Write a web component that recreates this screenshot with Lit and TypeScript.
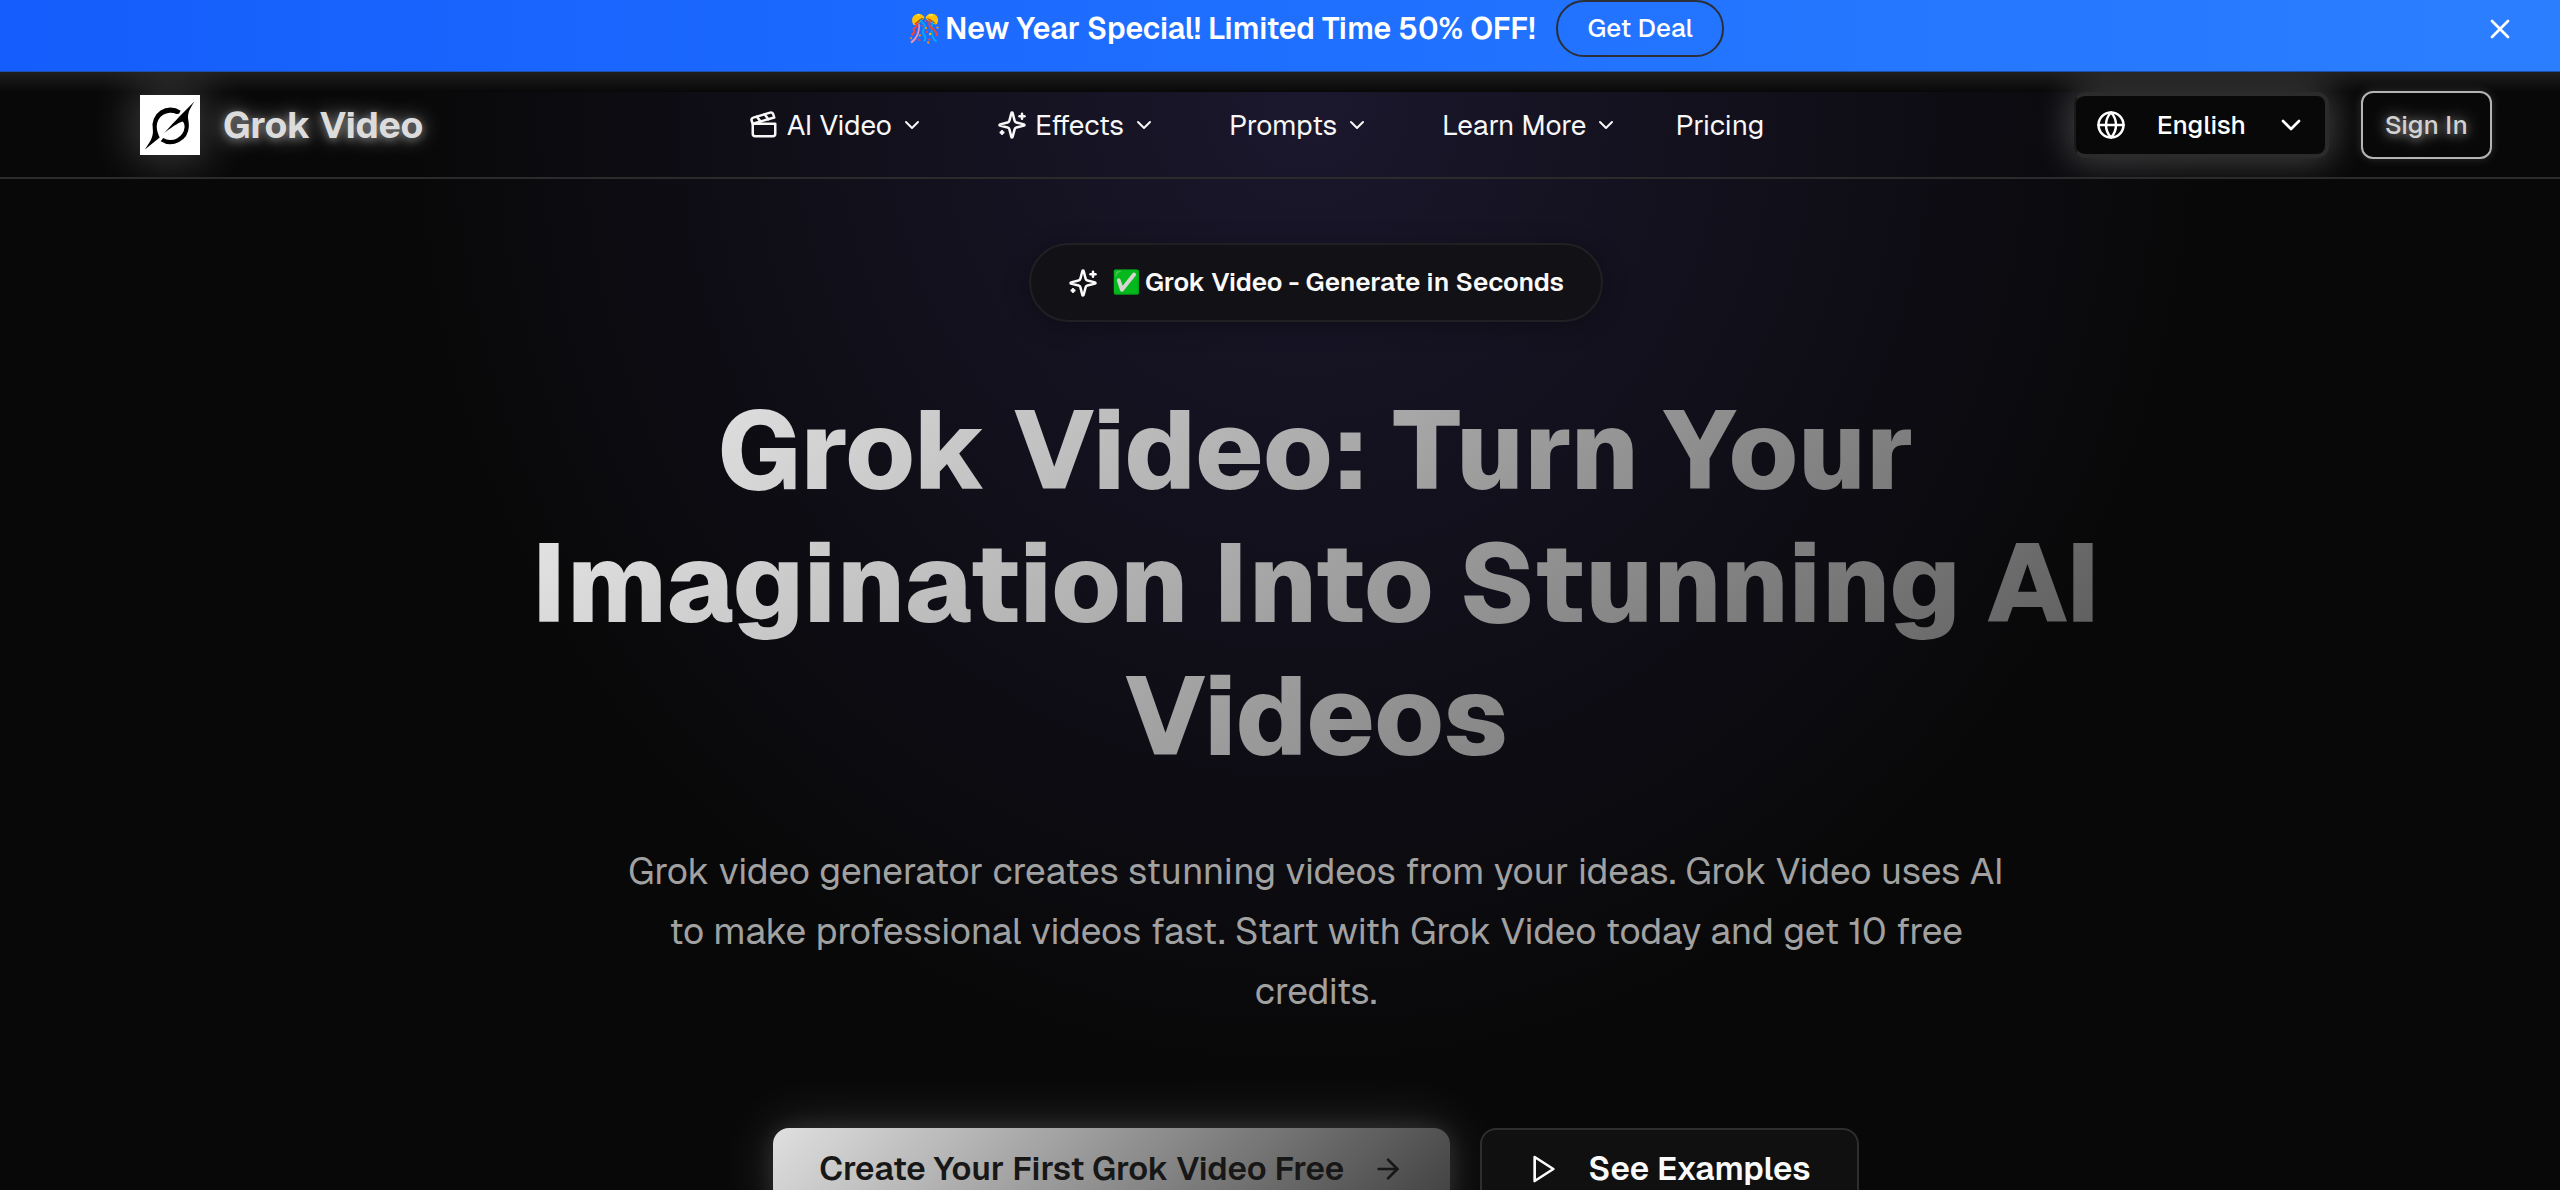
import { LitElement, html, css, svg } from "lit";
import { customElement, property, state } from "lit/decorators.js";

const ICONS = {
  clapper: svg`<path d="M20.2 6 3 11l-.9-2.4c-.3-1.1.3-2.2 1.3-2.5l13.5-4c1.1-.3 2.2.3 2.5 1.3Z"/><path d="m6.2 5.3 3.1 3.9"/><path d="m12.4 3.4 3.1 4"/><path d="M3 11h18v8a2 2 0 0 1-2 2H5a2 2 0 0 1-2-2Z"/>`,
  sparkles: svg`<path d="M9.937 15.5A2 2 0 0 0 8.5 14.063l-6.135-1.582a.5.5 0 0 1 0-.962L8.5 9.936A2 2 0 0 0 9.937 8.5l1.582-6.135a.5.5 0 0 1 .963 0L14.063 8.5A2 2 0 0 0 15.5 9.937l6.135 1.581a.5.5 0 0 1 0 .964L15.5 14.063a2 2 0 0 0-1.437 1.437l-1.582 6.135a.5.5 0 0 1-.963 0z"/><path d="M20 3v4"/><path d="M22 5h-4"/><path d="M4 17v2"/><path d="M5 18H3"/>`,
  globe: svg`<circle cx="12" cy="12" r="10"/><path d="M12 2a14.5 14.5 0 0 0 0 20 14.5 14.5 0 0 0 0-20"/><path d="M2 12h20"/>`,
  chevron: svg`<path d="m6 9 6 6 6-6"/>`,
  arrow: svg`<path d="M5 12h14"/><path d="m12 5 7 7-7 7"/>`,
  play: svg`<polygon points="5 3 19 12 5 21"/>`,
  close: svg`<path d="M18 6 6 18"/><path d="m6 6 12 12"/>`,
};
type IconName = keyof typeof ICONS;

@customElement("line-icon")
class LineIcon extends LitElement {
  @property() name: IconName = "globe";
  static styles = css`
    :host { display: inline-flex; flex: none; width: 30px; height: 30px; }
    .glyph {
      width: 100%; height: 100%; fill: none; stroke: currentColor;
      stroke-width: 2; stroke-linecap: round; stroke-linejoin: round;
    }
  `;
  render() {
    return html`<svg class="glyph" viewBox="0 0 24 24" aria-hidden="true">${ICONS[this.name]}</svg>`;
  }
}

const FONT = css`"Geist", "Inter", "Liberation Sans", sans-serif`;

@customElement("promo-banner")
class PromoBanner extends LitElement {
  @state() private open = true;
  static styles = css`
    :host { display: block; }
    .banner {
      display: grid; grid-template-columns: 1fr auto 1fr; align-items: center;
      padding: 0 44px 14px 116px;
      border-bottom: 1px solid #1c4fae;
      background: linear-gradient(90deg, #155dfc, #1f6fff 50%, #2b7fff);
      color: #fff;
    }
    .message { grid-column: 2; display: flex; align-items: center; gap: 21px; }
    .text {
      display: flex; align-items: center; gap: 3px;
      font-size: 30px; line-height: 40px; font-weight: 600;
    }
    .emoji { font-size: 27px; line-height: 40px; }
    .deal {
      font: 500 26px/33px ${FONT}; color: #fff; background: none;
      border: 2px solid #2b2f38; border-radius: 28px; padding: 10px 29px; cursor: pointer;
    }
    .close {
      justify-self: end; display: flex; padding: 0; border: 0; background: none;
      color: #fff; cursor: pointer;
    }
    .close line-icon { width: 32px; height: 32px; }
  `;
  render() {
    if (!this.open) return null;
    return html`
      <div class="banner" role="region" aria-label="Promotion">
        <div class="message">
          <span class="text"><span class="emoji">🎊</span> New Year Special! Limited Time 50% OFF!</span>
          <button class="deal" type="button">Get Deal</button>
        </div>
        <button class="close" type="button" aria-label="Close" @click=${() => (this.open = false)}>
          <line-icon name="close"></line-icon>
        </button>
      </div>
    `;
  }
}

interface NavItem { label: string; icon?: IconName; menu: boolean }
const NAV: NavItem[] = [
  { label: "AI Video", icon: "clapper", menu: true },
  { label: "Effects", icon: "sparkles", menu: true },
  { label: "Prompts", menu: true },
  { label: "Learn More", menu: true },
  { label: "Pricing", menu: false },
];

@customElement("site-header")
class SiteHeader extends LitElement {
  static styles = css`
    :host { display: block; }
    .bar {
      display: flex; align-items: center; justify-content: space-between;
      height: 105px; padding: 0 68px 0 140px;
      border-bottom: 2px solid #2b2b2b;
      background: linear-gradient(#1e1e1e, #080808) 0 0 / 100% 20px no-repeat;
      overflow: hidden;
    }
    .brand { display: flex; align-items: center; gap: 23px; color: inherit; text-decoration: none; }
    .logo {
      width: 60px; height: 60px; background: #fff;
      box-shadow: 0 0 48px 4px rgba(255, 255, 255, 0.24);
    }
    .name {
      font-size: 37px; line-height: 44px; font-weight: 700; color: #dcdcdc;
      text-shadow: 0 0 20px rgba(255, 255, 255, 0.5), 0 2px 8px rgba(255, 255, 255, 0.35);
    }
    .nav { display: flex; align-items: center; gap: 41px; }
    .item {
      display: flex; align-items: center; gap: 8px; padding: 0 16px; margin: 0; border: 0;
      background: none; color: #f7f7f7; font: 400 28px/40px ${FONT};
      text-decoration: none; cursor: pointer;
    }
    .plain { padding: 0; }
    .caret { width: 24px; height: 24px; }
    .tools { display: flex; align-items: center; gap: 32px; }
    .language {
      display: flex; align-items: center; box-sizing: border-box; height: 66px;
      padding: 0 18px 0 20px; color: #fff; background: #080808;
      border: 4px solid #2b2b2b; border-left: 2px solid #1a1a1a; border-radius: 12px;
      box-shadow: 0 0 36px 4px rgba(255, 255, 255, 0.24);
    }
    .picker {
      appearance: none; border: 0; outline: 0; margin: 0; padding: 0 28px 0 31px;
      background: transparent; color: #fff; font: 500 26px/40px ${FONT};
    }
    .drop { width: 32px; height: 32px; }
    .sign {
      box-sizing: border-box; height: 68px; padding: 0 22px; border: 2px solid #b4b4b4;
      border-radius: 12px; background: #080808; color: #d2d2d2;
      font: 500 26px/40px ${FONT}; cursor: pointer;
      box-shadow: 0 0 10px rgba(255, 255, 255, 0.16);
      text-shadow: 0 0 18px rgba(255, 255, 255, 0.55), 0 2px 8px rgba(255, 255, 255, 0.35);
    }
  `;
  private entry(item: NavItem) {
    if (!item.menu) return html`<a class="item plain" href="#pricing">${item.label}</a>`;
    return html`
      <button class="item" type="button" aria-haspopup="true">
        ${item.icon ? html`<line-icon name=${item.icon}></line-icon>` : null}
        ${item.label}
        <line-icon class="caret" name="chevron"></line-icon>
      </button>
    `;
  }
  render() {
    return html`
      <header class="bar">
        <a class="brand" href="#home">
          <svg class="logo" viewBox="0 0 183 183" aria-hidden="true">
            <path d="M124 48A55 55 0 0 0 39 104C41 122 37 136 15 166L60 130C56 120 51 110 51 96A42 42 0 0 1 111 58L119 57Z"/>
            <path d="M166 20C149 46 145 58 147 75C149 86 149 90 149 96A56 56 0 0 1 63 141L71 131A43 43 0 0 0 136 98C136 90 134 85 130 81C120 84 108 90 74 116C92 95 108 80 121 65Z"/>
          </svg>
          <span class="name">Grok Video</span>
        </a>
        <nav class="nav" aria-label="Main">${NAV.map((item) => this.entry(item))}</nav>
        <div class="tools">
          <label class="language">
            <line-icon name="globe"></line-icon>
            <select class="picker" aria-label="Language"><option>English</option></select>
            <line-icon class="drop" name="chevron"></line-icon>
          </label>
          <button class="sign" type="button">Sign In</button>
        </div>
      </header>
    `;
  }
}

@customElement("hero-section")
class HeroSection extends LitElement {
  static styles = css`
    :host { display: block; }
    .hero {
      display: flex; flex-direction: column; align-items: center;
      padding: 64px 0 80px 72px; text-align: center;
    }
    .badge {
      display: flex; align-items: center; gap: 14px; padding: 20px 37px;
      border: 2px solid #202024; border-radius: 40px; background: #121116;
      font-size: 26px; line-height: 35px; font-weight: 600; color: #fafafa;
      box-shadow: 0 4px 24px rgba(0, 0, 0, 0.3);
    }
    .label { display: flex; align-items: center; gap: 4px; }
    .check { font-size: 23px; line-height: 35px; filter: hue-rotate(30deg) saturate(2) brightness(0.85); }
    .title {
      max-width: 1664px; margin: 61px 0 59px;
      font-size: 111px; line-height: 133px; font-weight: 800; color: transparent;
      background: linear-gradient(135deg, #f2f2f2, #505050);
      -webkit-background-clip: text; background-clip: text;
    }
    .lead {
      max-width: 1400px; margin: 0 0 107px;
      font-size: 37px; line-height: 60px; color: #a1a1a1;
    }
    .actions { display: flex; gap: 30px; }
    .action {
      display: flex; align-items: center; gap: 28px; box-sizing: border-box; height: 82px;
      padding: 0 46px; border-radius: 16px; font: 600 33px/44px ${FONT}; cursor: pointer;
    }
    .action line-icon { width: 32px; height: 32px; }
    .primary {
      border: 0; color: #171717;
      background: linear-gradient(135deg, #e0e0e0, #404040);
      box-shadow: 0 0 60px rgba(255, 255, 255, 0.16), 0 0 24px rgba(255, 255, 255, 0.1);
    }
    .secondary { border: 2px solid #2e2e2e; background: #101010; color: #fafafa; }
  `;
  render() {
    return html`
      <section class="hero">
        <div class="badge">
          <line-icon name="sparkles"></line-icon>
          <span class="label"><span class="check">✅</span> Grok Video - Generate in Seconds</span>
        </div>
        <h1 class="title">Grok Video: Turn Your Imagination Into Stunning AI Videos</h1>
        <p class="lead">
          Grok video generator creates stunning videos from your ideas. Grok Video uses AI to make
          professional videos fast. Start with Grok Video today and get 10 free credits.
        </p>
        <div class="actions">
          <button class="action primary" type="button">
            Create Your First Grok Video Free <line-icon name="arrow"></line-icon>
          </button>
          <button class="action secondary" type="button">
            <line-icon name="play"></line-icon> See Examples
          </button>
        </div>
      </section>
    `;
  }
}

@customElement("app-root")
class AppRoot extends LitElement {
  static styles = css`
    :host {
      display: block; height: 100vh; overflow: hidden; color: #fff;
      font-family: ${FONT};
      background: radial-gradient(ellipse 36% 84% at 51% 8%, #1b172d, #080808);
    }
  `;
  render() {
    return html`
      <promo-banner></promo-banner>
      <site-header></site-header>
      <main><hero-section></hero-section></main>
    `;
  }
}
